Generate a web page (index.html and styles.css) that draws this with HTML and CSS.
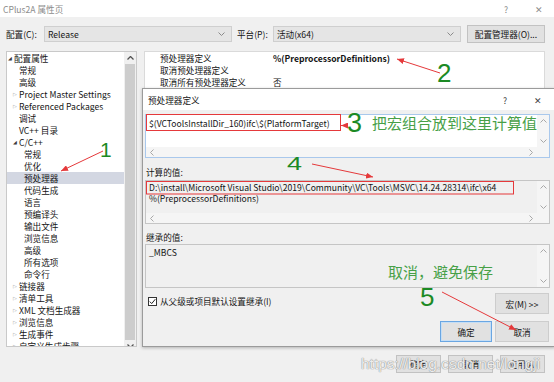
FILE: index.html
```html
<!DOCTYPE html>
<html lang="zh-CN">
<head>
    <meta charset="UTF-8">
    <title>CPlus2A 属性页</title>
    <link rel="stylesheet" href="styles.css">
</head>
<body>
    <div class="window">
        <div class="titlebar">
            <span class="title">CPlus2A 属性页</span>
            <span class="caption-btn help">?</span>
            <span class="caption-btn">✕</span>
        </div>

        <div class="toolbar">
            <span class="tb-label first">配置(C):</span>
            <div class="select">
                <span>Release</span>
                <svg class="chev" width="7" height="4" viewBox="0 0 7 4"><polyline points="0.5,0.5 3.5,3.5 6.5,0.5"/></svg>
            </div>
            <span class="tb-label">平台(P):</span>
            <div class="select">
                <span>活动(x64)</span>
                <svg class="chev" width="7" height="4" viewBox="0 0 7 4"><polyline points="0.5,0.5 3.5,3.5 6.5,0.5"/></svg>
            </div>
            <div class="button mgr">配置管理器(O)...</div>
        </div>

        <div class="main">
            <div class="tree">
                <div class="tree-items">
                    <div class="node l0"><span class="twisty open">◢</span>配置属性</div>
                    <div class="node l1">常规</div>
                    <div class="node l1">高级</div>
                    <div class="node l1t"><span class="twisty closed">▷</span>Project Master Settings</div>
                    <div class="node l1t"><span class="twisty closed">▷</span>Referenced Packages</div>
                    <div class="node l1">调试</div>
                    <div class="node l1">VC++ 目录</div>
                    <div class="node l1t"><span class="twisty open">◢</span>C/C++</div>
                    <div class="node l2">常规</div>
                    <div class="node l2">优化</div>
                    <div class="node l2 selected">预处理器</div>
                    <div class="node l2">代码生成</div>
                    <div class="node l2">语言</div>
                    <div class="node l2">预编译头</div>
                    <div class="node l2">输出文件</div>
                    <div class="node l2">浏览信息</div>
                    <div class="node l2">高级</div>
                    <div class="node l2">所有选项</div>
                    <div class="node l2">命令行</div>
                    <div class="node l1t"><span class="twisty closed">▷</span>链接器</div>
                    <div class="node l1t"><span class="twisty closed">▷</span>清单工具</div>
                    <div class="node l1t"><span class="twisty closed">▷</span>XML 文档生成器</div>
                    <div class="node l1t"><span class="twisty closed">▷</span>浏览信息</div>
                    <div class="node l1t"><span class="twisty closed">▷</span>生成事件</div>
                    <div class="node l1t"><span class="twisty closed">▷</span>自定义生成步骤</div>
                </div>
                <div class="tree-scroll">
                    <div class="arrow"><svg width="7" height="4" viewBox="0 0 7 4"><polyline points="0.5,3.5 3.5,0.5 6.5,3.5"/></svg></div>
                    <div class="thumb"></div>
                    <div class="arrow"><svg width="7" height="4" viewBox="0 0 7 4"><polyline points="0.5,0.5 3.5,3.5 6.5,0.5"/></svg></div>
                </div>
            </div>

            <div class="props">
                <div class="prop-row"><span class="prop-name">预处理器定义</span><span class="prop-value bold">%(PreprocessorDefinitions)</span></div>
                <div class="prop-row"><span class="prop-name">取消预处理器定义</span><span class="prop-value"></span></div>
                <div class="prop-row"><span class="prop-name">取消所有预处理器定义</span><span class="prop-value">否</span></div>
            </div>
        </div>

        <div class="footer">
            <div class="button foot-btn">确定</div>
            <div class="button foot-btn">取消</div>
            <div class="button foot-btn">应用(A)</div>
        </div>
    </div>

    <!-- modal editor -->
    <div class="dialog">
        <div class="dlg-title">
            <span class="title">预处理器定义</span>
            <span class="caption-btn help">?</span>
            <span class="caption-btn">✕</span>
        </div>
        <div class="dlg-body">
            <div class="edit focused">
                <div class="edit-text">
                    <div class="line">$(VCToolsInstallDir_160)ifc\$(PlatformTarget)</div>
                </div>
                <div class="vbar">
                    <svg width="7" height="4" viewBox="0 0 7 4"><polyline points="0.5,3.5 3.5,0.5 6.5,3.5"/></svg>
                    <svg width="7" height="4" viewBox="0 0 7 4"><polyline points="0.5,0.5 3.5,3.5 6.5,0.5"/></svg>
                </div>
                <div class="hbar">
                    <svg width="4" height="7" viewBox="0 0 4 7"><polyline points="3.5,0.5 0.5,3.5 3.5,6.5"/></svg>
                    <svg width="4" height="7" viewBox="0 0 4 7"><polyline points="0.5,0.5 3.5,3.5 0.5,6.5"/></svg>
                </div>
                <div class="corner"></div>
            </div>

            <div class="field-label">计算的值:</div>
            <div class="edit readonly">
                <div class="edit-text">
                    <div class="line">D:\install\Microsoft Visual Studio\2019\Community\VC\Tools\MSVC\14.24.28314\ifc\x64</div>
                    <div class="line">%(PreprocessorDefinitions)</div>
                </div>
                <div class="vbar">
                    <svg width="7" height="4" viewBox="0 0 7 4"><polyline points="0.5,3.5 3.5,0.5 6.5,3.5"/></svg>
                    <svg width="7" height="4" viewBox="0 0 7 4"><polyline points="0.5,0.5 3.5,3.5 6.5,0.5"/></svg>
                </div>
                <div class="hbar">
                    <svg width="4" height="7" viewBox="0 0 4 7"><polyline points="3.5,0.5 0.5,3.5 3.5,6.5"/></svg>
                    <svg width="4" height="7" viewBox="0 0 4 7"><polyline points="0.5,0.5 3.5,3.5 0.5,6.5"/></svg>
                </div>
                <div class="corner"></div>
            </div>

            <div class="field-label second">继承的值:</div>
            <div class="edit readonly single">
                <div class="edit-text">
                    <div class="line">_MBCS</div>
                </div>
                <div class="vbar">
                    <svg width="7" height="4" viewBox="0 0 7 4"><polyline points="0.5,3.5 3.5,0.5 6.5,3.5"/></svg>
                    <svg width="7" height="4" viewBox="0 0 7 4"><polyline points="0.5,0.5 3.5,3.5 6.5,0.5"/></svg>
                </div>
            </div>

            <div class="check-row">
                <label class="check">
                    <span class="box"><svg width="7" height="7" viewBox="0 0 7 7"><polyline points="0.8,3.6 2.7,5.6 6.3,1.2"/></svg></span>
                    从父级或项目默认设置继承(I)
                </label>
                <div class="button dlg-btn">宏(M) &gt;&gt;</div>
            </div>

            <div class="btn-row">
                <div class="button dlg-btn default">确定</div>
                <div class="button dlg-btn">取消</div>
            </div>
        </div>
    </div>

    <div class="watermark">https://blog.csdn.net/longji</div>

    <!-- hand-drawn annotations -->
    <svg class="marks" width="554" height="382" viewBox="0 0 554 382">
        <defs>
            <marker id="head" markerUnits="userSpaceOnUse" markerWidth="7" markerHeight="6" refX="7" refY="3" orient="auto">
                <path d="M0,0 L7,3 L0,6 z" fill="#e5393b"/>
            </marker>
        </defs>
        <rect x="146.5" y="114.5" width="194" height="16" />
        <rect x="146.5" y="181.5" width="367" height="12.5" />
        <line x1="103" y1="151" x2="61" y2="171" />
        <line x1="440" y1="73" x2="397" y2="59" />
        <line x1="348" y1="125.5" x2="341" y2="125.5" />
        <line x1="312" y1="164" x2="373" y2="177" />
        <line x1="442" y1="292" x2="516" y2="330" />
    </svg>

    <div class="num n1">1</div>
    <div class="num n2">2</div>
    <div class="num n3">3</div>
    <div class="num n4">4</div>
    <div class="num n5">5</div>
    <div class="note note-a">把宏组合放到这里计算值</div>
    <div class="note note-b">取消，避免保存</div>
</body>
</html>
```

FILE: styles.css
```css
* {
    margin: 0;
    padding: 0;
    box-sizing: border-box;
}

body {
    width: 554px;
    height: 382px;
    overflow: hidden;
    position: relative;
    background-color: #f0f0f0;
    font-family: "Noto Sans CJK SC", "Noto Sans", sans-serif;
    font-size: 8.6px;
    color: #141414;
}

svg polyline {
    fill: none;
    stroke-width: 1;
}

/* ---------- main property window ---------- */

.titlebar {
    height: 17px;
    display: flex;
    align-items: center;
    padding-left: 3px;
    background-color: #fff;
    color: #8c8c8c;
}

.title {
    flex: 1;
}

.caption-btn {
    width: 30px;
    text-align: center;
    color: #8c8c8c;
}

.caption-btn.help {
    margin-right: 3px;
}

.toolbar {
    height: 33px;
    display: flex;
    align-items: center;
    padding-left: 6px;
}

.tb-label {
    width: 36px;
    margin-left: 5px;
}

.tb-label.first {
    width: 38px;
    margin-left: 0;
}

.select {
    width: 188px;
    height: 16px;
    display: flex;
    align-items: center;
    justify-content: space-between;
    padding: 0 6px 0 3px;
    background-color: #e5e5e5;
    border: 1px solid #cfcfcf;
}

.select .chev polyline {
    stroke: #8a8a8a;
}

.button {
    display: flex;
    align-items: center;
    justify-content: center;
    background-color: #e1e1e1;
    border: 1px solid #c2c2c2;
}

.mgr {
    width: 78px;
    height: 18px;
    margin-left: 6px;
}

.main {
    height: 297px;
    display: grid;
    grid-template-columns: 131px 401px;
    column-gap: 7px;
    padding: 1px 0 0 6px;
}

.tree {
    height: 296px;
    display: grid;
    grid-template-columns: 1fr 12px;
    background-color: #fff;
    border: 1px solid #c9c9c9;
    overflow: hidden;
}

.node {
    height: 12px;
    line-height: 12px;
    display: flex;
    align-items: center;
    white-space: nowrap;
}

.node.l0 { padding-left: 1px; }
.node.l1 { padding-left: 12px; }
.node.l1t { padding-left: 6px; }
.node.l2 { padding-left: 17px; }

.node.selected {
    background-color: #d3d7e2;
}

.twisty {
    width: 6px;
    font-family: "DejaVu Sans", sans-serif;
    font-size: 5px;
    line-height: 12px;
}

.twisty.open {
    color: #3a3a3a;
}

.twisty.closed {
    color: #9a9a9a;
}

.tree-scroll {
    display: flex;
    flex-direction: column;
    background-color: #f0f0f0;
}

.tree-scroll .arrow {
    height: 12px;
    display: flex;
    align-items: center;
    justify-content: center;
}

.tree-scroll polyline {
    stroke: #505050;
    stroke-width: 1.3;
}

.thumb {
    flex: 1;
    margin: 0 1px;
    background-color: #cdcdcd;
}

.props {
    height: 296px;
    padding-top: 0;
    background-color: #fff;
    border: 1px solid #dadada;
}

.prop-row {
    height: 12px;
    line-height: 12px;
    display: flex;
}

.prop-name {
    width: 128px;
    padding-left: 15px;
}

.prop-value.bold {
    font-weight: 700;
}

.footer {
    height: 35px;
    display: flex;
    justify-content: flex-end;
    gap: 7px;
    padding: 8px 9px 0 0;
}

.foot-btn {
    width: 45px;
    height: 18px;
}

/* ---------- editor dialog ---------- */

.dialog {
    position: absolute;
    left: 142px;
    top: 88px;
    width: 413px;
    height: 259px;
    background-color: #f0f0f0;
    border: 1px solid #9b9b9b;
    box-shadow: 0 1px 3px rgba(0, 0, 0, 0.25);
}

.dlg-title {
    height: 21px;
    display: flex;
    align-items: center;
    padding-left: 5px;
    background-color: #fff;
}

.dlg-title .caption-btn {
    color: #444;
}

.dlg-title .caption-btn:last-child {
    margin-right: 1px;
}

.dlg-body {
    padding: 4px 4px 0 2px;
}

.edit {
    height: 44px;
    display: grid;
    grid-template-columns: 1fr 12px;
    grid-template-rows: 1fr 10px;
    border: 1px solid #c5c5c5;
    background-color: #f0f0f0;
}

.edit.focused {
    border-color: #a9c8ec;
}

.edit.focused .edit-text {
    background-color: #fff;
}

.edit.single {
    grid-template-rows: 1fr;
}

.edit-text {
    padding: 1px 3px 0 3px;
    line-height: 11px;
    white-space: nowrap;
    overflow: hidden;
}

.edit.focused .edit-text {
    padding-top: 2px;
    line-height: 12px;
}

.edit.single .edit-text {
    padding-top: 2px;
}

.vbar {
    display: flex;
    flex-direction: column;
    justify-content: space-between;
    align-items: center;
    padding: 4px 0 4px;
    background-color: #f5f5f5;
}

.hbar {
    display: flex;
    justify-content: space-between;
    align-items: center;
    padding: 0 4px;
    background-color: #f5f5f5;
}

.corner {
    background-color: #f5f5f5;
}

.vbar polyline,
.hbar polyline {
    stroke: #a8a8a8;
}

.field-label {
    height: 22px;
    padding: 8px 0 0 1px;
    line-height: 12px;
}

.field-label.second {
    height: 20px;
    padding-top: 7px;
}

.check-row {
    display: flex;
    justify-content: space-between;
    margin-top: 5px;
    padding-right: 1px;
}

.check {
    height: 16px;
    display: flex;
    align-items: center;
    padding-left: 3px;
}

.check .box {
    width: 9px;
    height: 9px;
    margin-right: 3px;
    display: flex;
    align-items: center;
    justify-content: center;
    background-color: #fff;
    border: 1px solid #333;
}

.check .box polyline {
    stroke: #222;
}

.dlg-btn {
    width: 54px;
    height: 21px;
    border-color: #cdcdcd;
}

.btn-row {
    display: flex;
    justify-content: flex-end;
    gap: 3px;
    margin-top: 7px;
    padding-right: 1px;
}

.dlg-btn.default {
    width: 52px;
    border-color: #6aa6e2;
    box-shadow: inset 0 0 0 1px #c5def5;
}

/* ---------- overlays ---------- */

.watermark {
    position: absolute;
    left: 361px;
    top: 354px;
    font-family: "Liberation Sans", sans-serif;
    font-size: 15.5px;
    line-height: 20px;
    color: rgba(255, 255, 255, 0.85);
    text-shadow: 0 0 1px #8a8a8a, 0 0 1px #8a8a8a;
}

.marks {
    position: absolute;
    left: 0;
    top: 0;
    pointer-events: none;
}

.marks rect {
    fill: none;
    stroke: #e5393b;
    stroke-width: 1;
}

.marks line {
    stroke: #e5393b;
    stroke-width: 1;
    marker-end: url(#head);
}

.num {
    position: absolute;
    font-family: "Liberation Sans", sans-serif;
    color: #1c8a24;
    line-height: 1;
}

.n1 { left: 100px; top: 139px; font-size: 21px; }
.n2 { left: 437px; top: 60px; font-size: 26px; }
.n3 { left: 347px; top: 110px; font-size: 27px; }
.n4 { left: 287px; top: 155px; font-size: 18px; transform: scaleX(1.5); transform-origin: left top; }
.n5 { left: 420px; top: 284px; font-size: 26px; }

.note {
    position: absolute;
    font-size: 15px;
    line-height: 15px;
    color: #47a047;
    white-space: nowrap;
}

.note-a { left: 372px; top: 115px; }
.note-b { left: 388px; top: 264px; }
```
